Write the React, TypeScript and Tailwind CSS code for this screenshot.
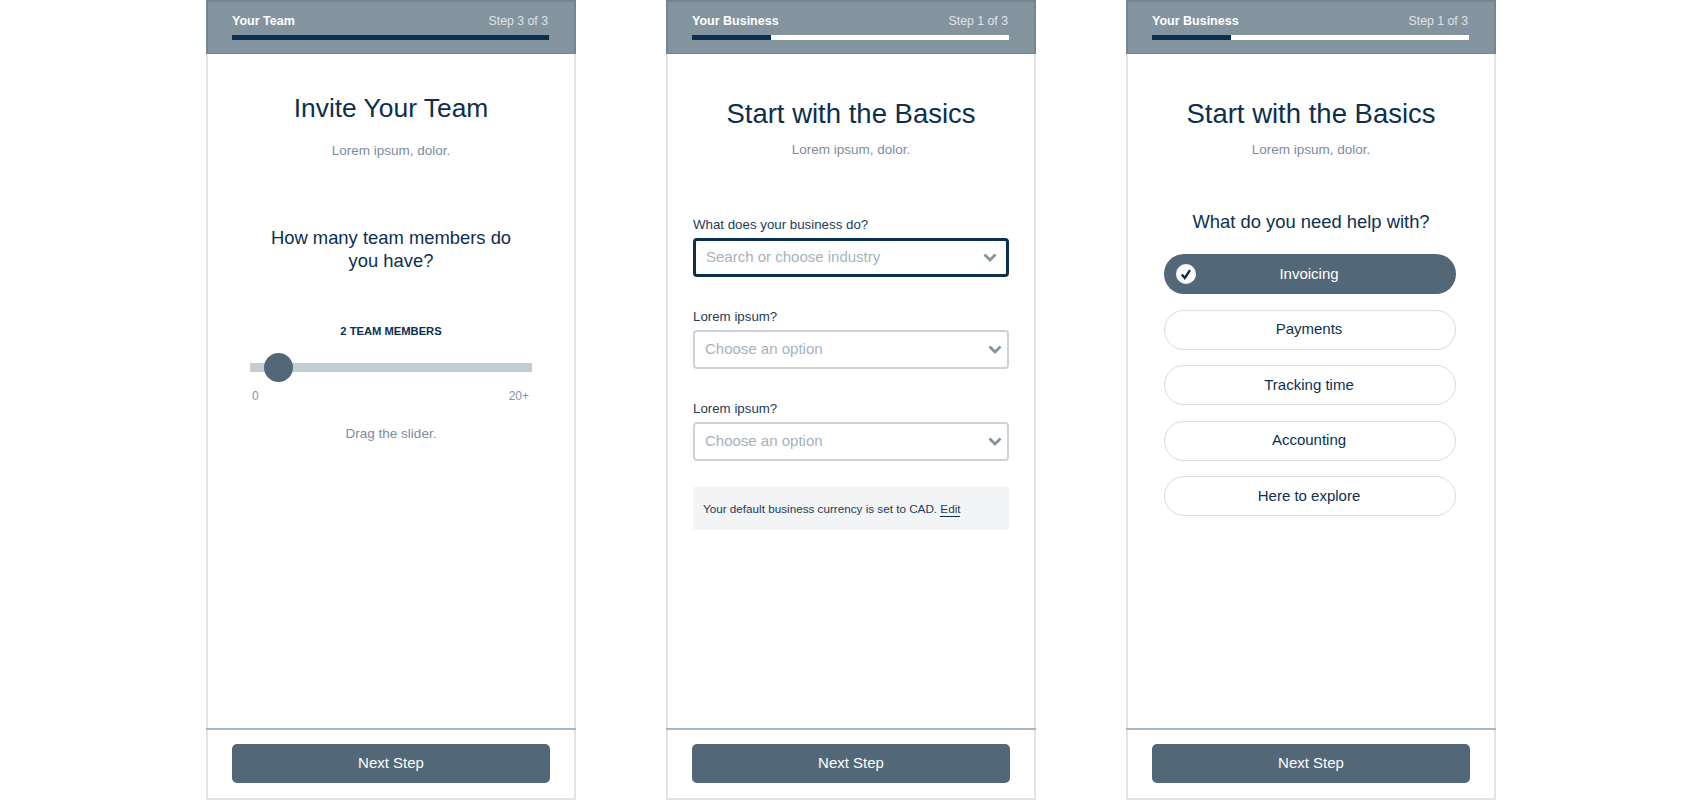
import React from "react";

function Chevron() {
  return (
    <svg viewBox="0 0 14 9" className="w-[14px] h-[9px]" fill="none">
      <path d="M1.5 1.5 L7 7 L12.5 1.5" stroke="#84949f" strokeWidth="2.8" />
    </svg>
  );
}

function Header({ title, step, pct }: { title: string; step: string; pct: string }) {
  return (
    <div className="h-[54px] shrink-0 -mx-[2px] bg-[#84949f] border-t-2 border-x-2 border-b border-[#73858f] pl-[24px] pr-[25px] flex flex-col">
      <div className="flex justify-between items-center h-[33px] pt-[5px]">
        <span className="text-[12.5px] font-bold text-white">{title}</span>
        <span className="text-[12.3px] text-[#dfe3e6] pr-[1px]">{step}</span>
      </div>
      <div className="h-[5px] bg-white flex">
        <div className={"h-full bg-[#0d2f4f] " + pct} />
      </div>
    </div>
  );
}

function Footer() {
  return (
    <div className="h-[70px] shrink-0 -mx-[2px] border-t-2 border-[#a9b7c4] px-[26px] pt-[14px]">
      <div className="h-[39px] rounded-[5px] bg-[#526879] text-white text-[15px] flex items-center justify-center">
        Next Step
      </div>
    </div>
  );
}

function Phone({ children }: { children: React.ReactNode }) {
  return (
    <div className="w-[370px] h-[800px] border-x-2 border-b-2 border-[#e1e3e6] flex flex-col bg-white">
      {children}
    </div>
  );
}

function Title({ text, className, subClass }: { text: string; className: string; subClass: string }) {
  return (
    <>
      <h1 className={"text-center leading-[34px] text-[#0d2f4f] " + className}>{text}</h1>
      <p className={"text-center text-[13.5px] leading-[20px] text-[#7b8d9c] " + subClass}>Lorem ipsum, dolor.</p>
    </>
  );
}

function Select({ label, placeholder, active, mt }: { label: string; placeholder: string; active?: boolean; mt: string }) {
  return (
    <div className={mt}>
      <div className="text-[13.3px] leading-[20px] text-[#1d3c58]">{label}</div>
      <div
        className={
          "mt-[3px] h-[39px] rounded-[4px] bg-white flex items-center justify-between pl-[10px] border-2 " +
          (active ? "border-[3px] border-[#0d2f4f] pr-[9px]" : "border-[#ccd3da] pr-[5px]")
        }
      >
        <span className="text-[15px] text-[#a6b2bd]">{placeholder}</span>
        <Chevron />
      </div>
    </div>
  );
}

function Pill({ text, selected }: { text: string; selected?: boolean }) {
  return (
    <div
      className={
        "relative h-[40px] rounded-full flex items-center justify-center text-[15px] pr-[2px] " +
        (selected ? "bg-[#526879] text-white" : "border border-[#d6dde3] text-[#0d2f4f]")
      }
    >
      {selected && (
        <svg viewBox="0 0 20 20" className="absolute left-[12px] top-[10px] w-[20px] h-[20px]">
          <circle cx="10" cy="10" r="10" fill="#fff" />
          <path d="M5.8 10.5 L8.8 14 L14 6.2" fill="none" stroke="#0d2f4f" strokeWidth="2.4" />
        </svg>
      )}
      {text}
    </div>
  );
}

export default function App() {
  return (
    <div
      className="w-[1700px] h-[800px] bg-white flex justify-center gap-[90px] overflow-hidden pl-[2px]"
      style={{ fontFamily: '"Liberation Sans", Arial, sans-serif' }}
    >
      <Phone>
        <Header title="Your Team" step="Step 3 of 3" pct="w-full" />
        <main className="flex-1 flex flex-col">
          <Title text="Invite Your Team" className="mt-[37px] text-[26.4px]" subClass="mt-[16px]" />
          <h2 className="text-center text-[18.4px] leading-[23px] text-[#0d2f4f] mt-[65px] mx-auto w-[270px]">
            How many team members do you have?
          </h2>
          <div className="text-center text-[11.2px] leading-[16px] font-bold text-[#0d2f4f] mt-[51px]">2 TEAM MEMBERS</div>
          <div className="mx-[42px] mt-[24px] h-[9px] bg-[#c2ccd3] relative">
            <div className="absolute left-[14px] -top-[10px] w-[29px] h-[29px] rounded-full bg-[#526879]" />
          </div>
          <div className="mx-[44px] mt-[16px] flex justify-between text-[12px] leading-[16px] text-[#84949f] pr-[1px]">
            <span>0</span>
            <span>20+</span>
          </div>
          <p className="text-center text-[13.5px] leading-[20px] text-[#7b8d9c] mt-[20px]">Drag the slider.</p>
        </main>
        <Footer />
      </Phone>

      <Phone>
        <Header title="Your Business" step="Step 1 of 3" pct="w-1/4" />
        <main className="flex-1 flex flex-col">
          <Title text="Start with the Basics" className="mt-[43px] text-[27.5px]" subClass="mt-[9px]" />
          <div className="mx-[25px]">
            <Select label="What does your business do?" placeholder="Search or choose industry" active mt="mt-[55px]" />
            <Select label="Lorem ipsum?" placeholder="Choose an option" mt="mt-[30px]" />
            <Select label="Lorem ipsum?" placeholder="Choose an option" mt="mt-[30px]" />
            <div className="mt-[26px] h-[43px] bg-[#f3f4f6] flex items-center pl-[10px] text-[11.7px] text-[#1d3c58]">
              <span>
                Your default business currency is set to CAD.{" "}
                <span className="border-b border-[#0d2f4f] pb-px">Edit</span>
              </span>
            </div>
          </div>
        </main>
        <Footer />
      </Phone>

      <Phone>
        <Header title="Your Business" step="Step 1 of 3" pct="w-1/4" />
        <main className="flex-1 flex flex-col">
          <Title text="Start with the Basics" className="mt-[43px] text-[27.5px]" subClass="mt-[9px]" />
          <h2 className="text-center text-[18.4px] leading-[23px] text-[#0d2f4f] mt-[50px]">What do you need help with?</h2>
          <div className="ml-[36px] mr-[38px] mt-[21px] flex flex-col gap-[15.5px]">
            <Pill text="Invoicing" selected />
            <Pill text="Payments" />
            <Pill text="Tracking time" />
            <Pill text="Accounting" />
            <Pill text="Here to explore" />
          </div>
        </main>
        <Footer />
      </Phone>
    </div>
  );
}
